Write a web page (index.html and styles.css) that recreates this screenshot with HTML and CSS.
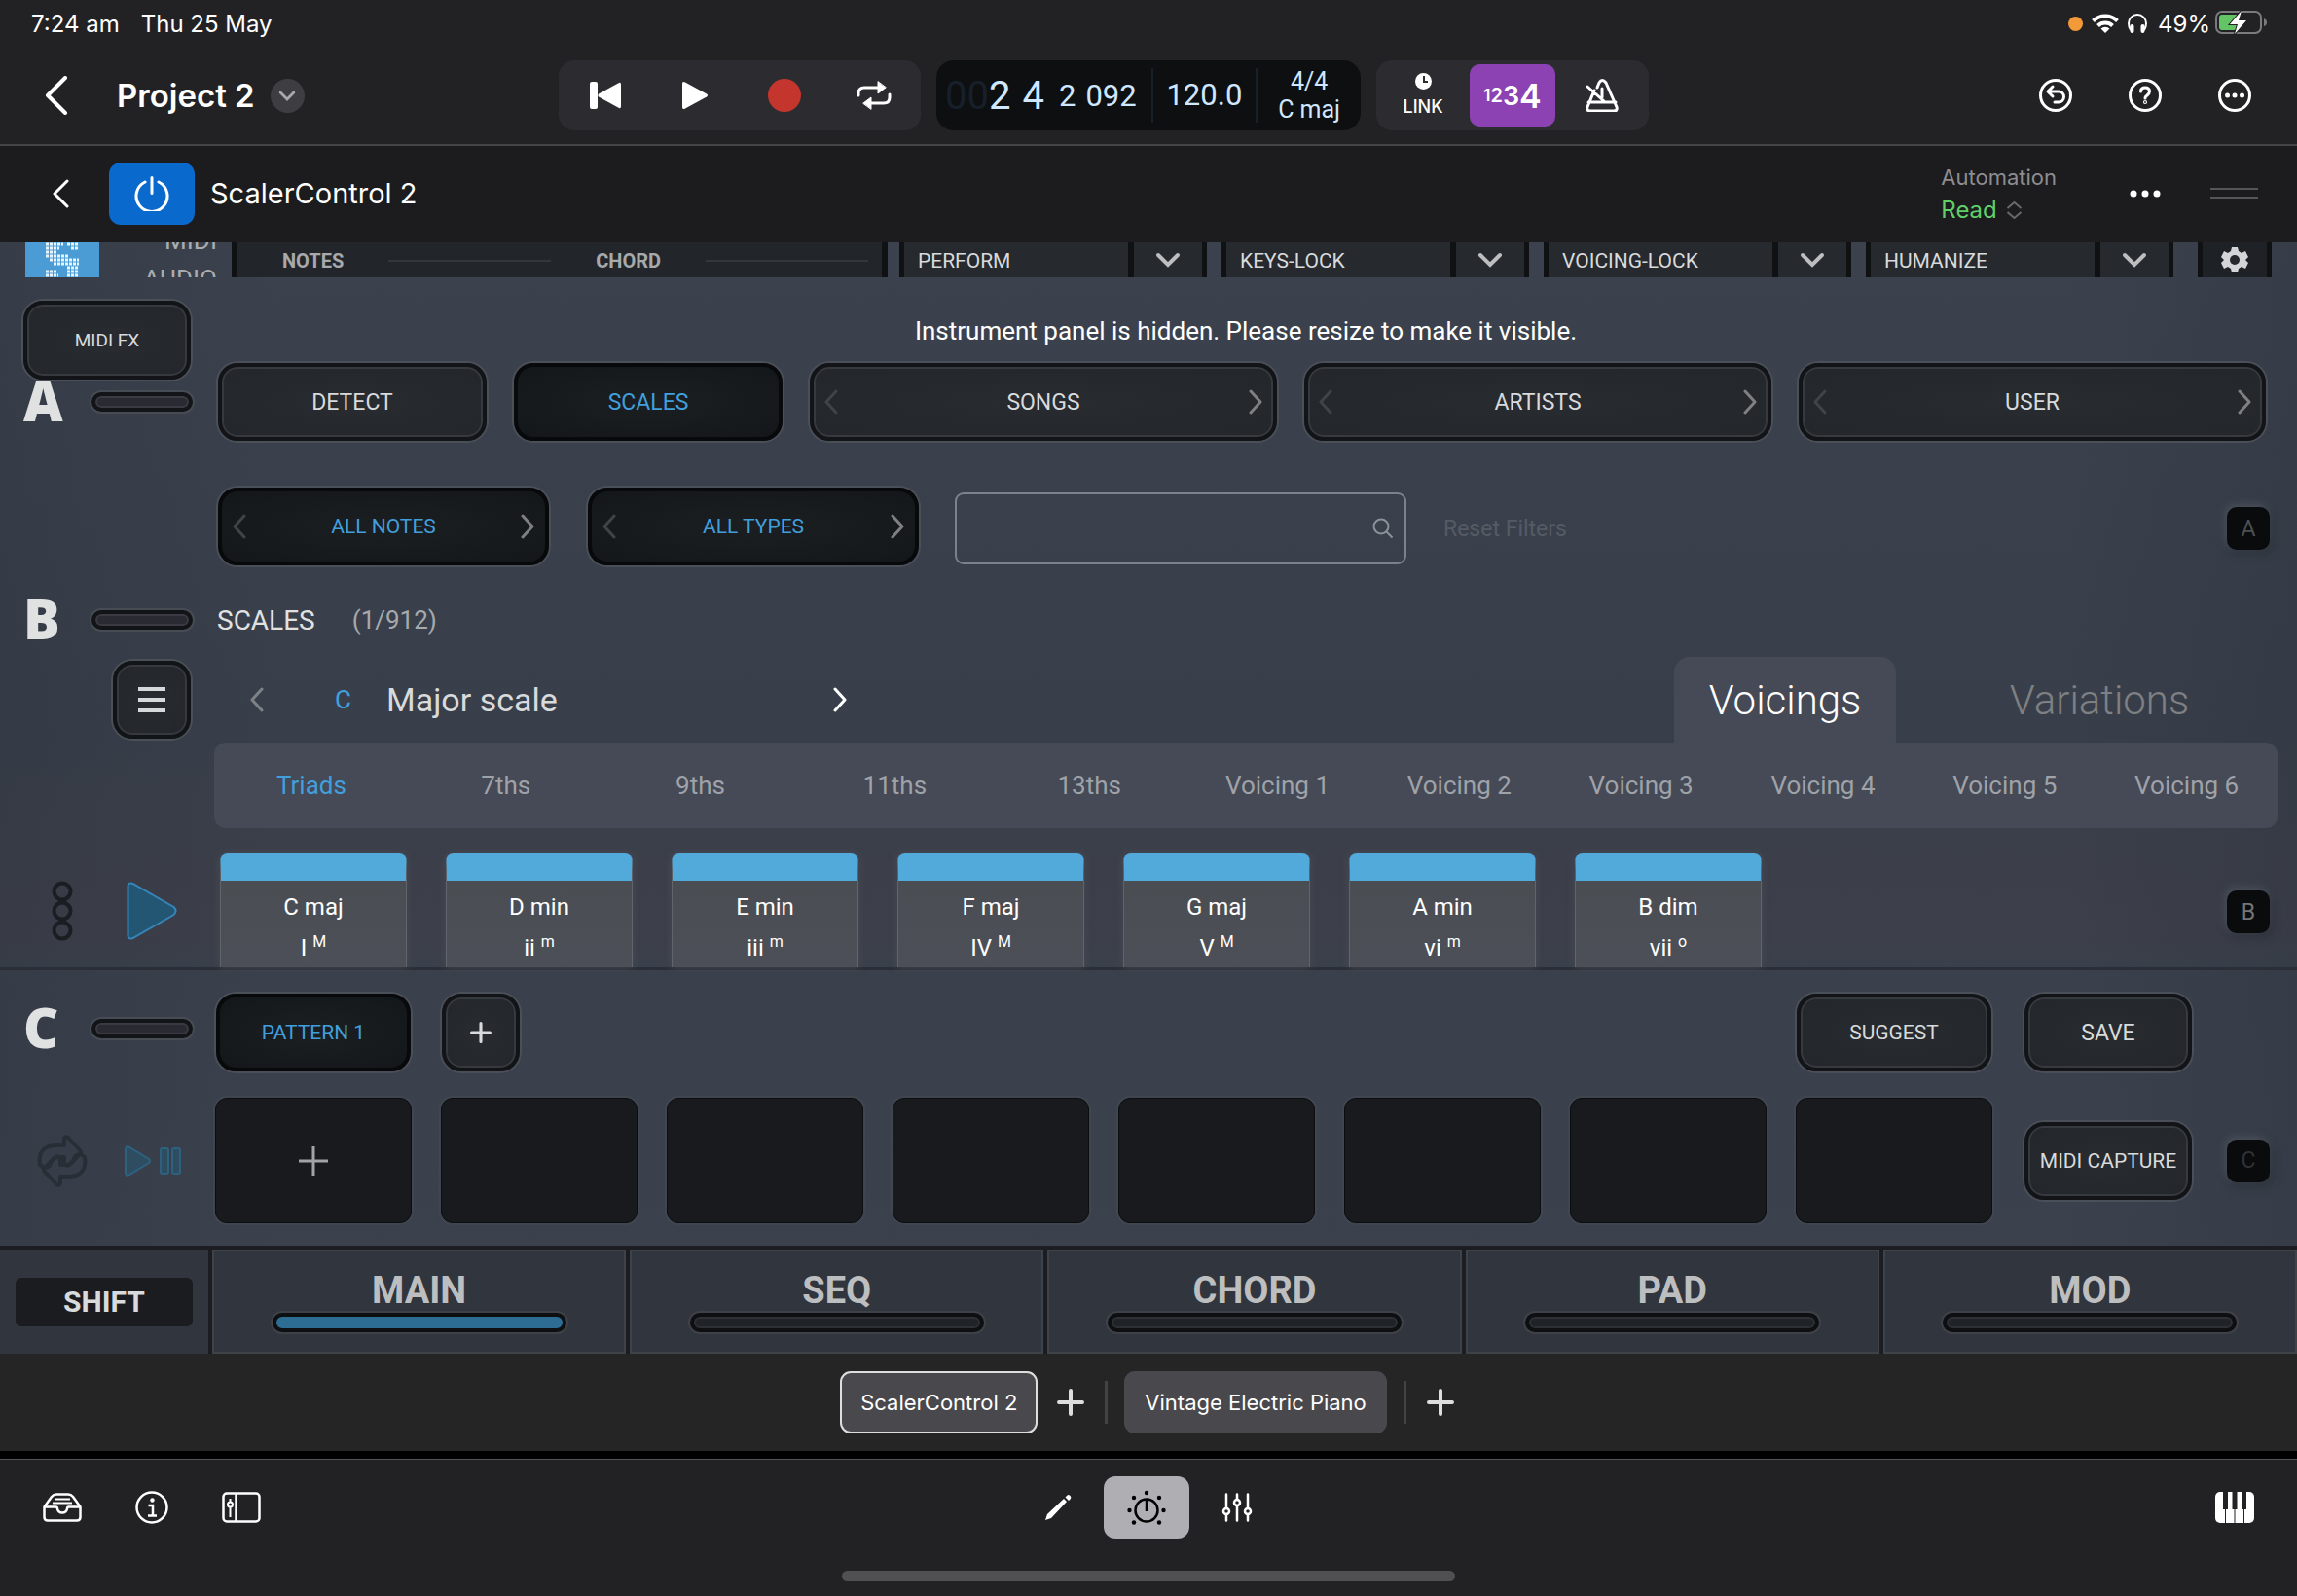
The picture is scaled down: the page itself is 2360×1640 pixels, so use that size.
FILE: index.html
```html
<!DOCTYPE html>
<html lang="en">
<head>
  <meta charset="UTF-8">
  <meta name="viewport" content="width=device-width, initial-scale=1.0">
  <title>Project 2</title>
  <link rel="stylesheet" href="styles.css">
</head>
<body>
  <svg class="defs" width="0" height="0">
    <symbol id="prev" viewBox="0 0 16 26"><path d="M13 2 3 13l10 11" fill="none" stroke="currentColor" stroke-width="3" stroke-linecap="round" stroke-linejoin="round"/></symbol>
    <symbol id="next" viewBox="0 0 16 26"><path d="m3 2 10 11L3 24" fill="none" stroke="currentColor" stroke-width="3" stroke-linecap="round" stroke-linejoin="round"/></symbol>
    <symbol id="down" viewBox="0 0 26 16"><path d="m3 3 10 10L23 3" fill="none" stroke="currentColor" stroke-width="4" stroke-linecap="round"/></symbol>
    <symbol id="plus" viewBox="0 0 28 28"><path d="M14 2v24M2 14h24" fill="none" stroke="currentColor" stroke-width="4" stroke-linecap="round"/></symbol>
  </svg>

  <div class="status">
    <span>7:24 am</span>
    <span>Thu 25 May</span>
    <div class="status-right">
      <i class="dot"></i>
      <svg width="28" height="20" viewBox="0 0 28 20" fill="none" stroke="#fff" stroke-width="4"><path d="M1.500 7.500a18 18 0 0 1 25 0M6.500 12.500a11 11 0 0 1 15 0"/><path d="M14 20l-4.500-4.500a6.500 6.500 0 0 1 9 0z" fill="#fff" stroke="none"/></svg>
      <svg width="20" height="20" viewBox="0 0 20 20" fill="none" stroke="#fff" stroke-width="2"><path d="M3 17C1 14 1 12 1 10a9 9 0 0 1 18 0c0 2 0 4-2 7"/><path d="M4.500 13v5M15.500 13v5" stroke-width="4" stroke-linecap="round"/></svg>
      <span>49%</span>
      <svg width="54" height="26" viewBox="0 0 54 26"><rect x="1" y="1" width="46" height="22" rx="6" fill="none" stroke="#7b7b7d" stroke-width="2"/><path d="M50 8q3 1 3 4t-3 4z" fill="#7b7b7d"/><rect x="4" y="4" width="20" height="16" rx="3" fill="#63c466"/><path d="M27 0 15 14h8l-3 10 12-14h-8z" fill="#fff" stroke="#222224" stroke-width="2" paint-order="stroke"/></svg>
    </div>
  </div>

  <header class="toolbar">
    <div class="project">
      <button class="icon back"><svg width="24" height="40" viewBox="0 0 24 40"><path d="M21 2 3 20l18 18" fill="none" stroke="currentColor" stroke-width="4" stroke-linecap="round" stroke-linejoin="round"/></svg></button>
      <h1>Project 2</h1>
      <button class="icon caret"><svg width="18" height="11"><use href="#down"/></svg></button>
    </div>
    <div class="group">
      <button class="icon"><svg width="32" height="28" viewBox="0 0 32 28" fill="currentColor"><rect width="8" height="28" rx="2"/><path d="M30 1q2-1 2 2v22q0 3-2 2L9 15.500q-1.500-1.500 0-3z"/></svg></button>
      <button class="icon"><svg width="26" height="28" viewBox="0 0 26 28" fill="currentColor"><path d="M0 2q0-3 3-1.500l22 12q2 1.500 0 3l-22 12Q0 29 0 26z"/></svg></button>
      <button class="icon"><svg width="34" height="34"><circle cx="17" cy="17" r="17" fill="#c4352d"/></svg></button>
      <button class="icon"><svg width="36" height="30" viewBox="0 0 36 30" fill="none" stroke="currentColor" stroke-width="3" stroke-linecap="round"><path d="M2 15v-2q0-6 6-6h15M34 14v3q0 6-6 6H14"/><path d="M22 1v12l8-6zM15 29V17l-8 6z" fill="currentColor" stroke-width="1" stroke-linejoin="round"/></svg></button>
    </div>
    <div class="lcd">
      <div class="position"><span class="big"><span class="ghost">00</span>2</span><span class="big">4</span><span class="beat">2</span><span>092</span></div>
      <div class="tempo">120.0</div>
      <div class="signature"><span>4/4</span><span>C maj</span></div>
    </div>
    <div class="group">
      <button class="icon link"><svg width="17" height="17" viewBox="0 0 17 17"><circle cx="8.500" cy="8.500" r="8.500" fill="#fff"/><path d="M9 3v6h4" fill="none" stroke="#2c2b30" stroke-width="2"/></svg>LINK</button>
      <button class="icon count"><span>1</span><span>2</span><span>3</span><span>4</span></button>
      <button class="icon"><svg width="34" height="34" viewBox="0 0 34 34" fill="none" stroke="currentColor" stroke-width="3" stroke-linecap="round" stroke-linejoin="round"><path d="M9 12 2 29q-1 4 3 4h24q4 0 3-4L21 4q-4-5-7 0l-2 5M3 24h28M17 10v9M2 8l17 15"/></svg></button>
    </div>
    <div class="actions">
      <button class="icon"><svg width="34" height="34" viewBox="0 0 34 34" fill="none" stroke="currentColor" stroke-width="3" stroke-linecap="round" stroke-linejoin="round"><circle cx="17" cy="17" r="15.500"/><path d="m14 8-5 5 5 5M10 13h10a5.500 5.500 0 0 1 0 11h-4"/></svg></button>
      <button class="icon"><svg width="34" height="34" viewBox="0 0 34 34" fill="none" stroke="currentColor" stroke-width="3" stroke-linecap="round"><circle cx="17" cy="17" r="15.500"/><path d="M12.500 13q0-4 4.500-4t4.500 4q0 2-2.500 4-2 1.500-2 3"/><circle cx="17" cy="24" r=".6"/></svg></button>
      <button class="icon"><svg width="34" height="34" viewBox="0 0 34 34" fill="none" stroke="currentColor" stroke-width="3"><circle cx="17" cy="17" r="15.500"/><g fill="currentColor" stroke="none"><circle cx="9.500" cy="17" r="2.500"/><circle cx="17" cy="17" r="2.500"/><circle cx="24.500" cy="17" r="2.500"/></g></svg></button>
    </div>
  </header>

  <div class="plugin-bar">
    <button class="icon back"><svg width="18" height="30" viewBox="0 0 18 30"><path d="M16 2 3 15l13 13" fill="none" stroke="currentColor" stroke-width="3" stroke-linecap="round" stroke-linejoin="round"/></svg></button>
    <button class="icon power"><svg width="36" height="36" viewBox="0 0 36 36" fill="none" stroke="currentColor" stroke-width="3" stroke-linecap="round"><path d="M11 6a16 16 0 1 0 14 0M18 1.500v16"/></svg></button>
    <h2>ScalerControl 2</h2>
    <div class="automation">
      <span>Automation</span>
      <button class="read">Read <svg width="17" height="18" viewBox="0 0 17 18" fill="none" stroke="#68686c" stroke-width="2"><path d="m1.500 7 7-6 7 6M1.500 11l7 6 7-6"/></svg></button>
    </div>
    <button class="icon more"><svg width="32" height="8" fill="currentColor"><circle cx="4" cy="4" r="3.500"/><circle cx="16" cy="4" r="3.500"/><circle cx="28" cy="4" r="3.500"/></svg></button>
    <div class="grip"></div>
  </div>

  <main class="plugin">
    <div class="strip">
      <div class="logo"><svg width="76" height="36" viewBox="0 0 76 36"><path d="M21 2h18M43 2h12M21 6h14M47 6h8M21 10h12M21 14h24M25 18h30M29 22h26M43 26h12M21 30h11M43 30h12M21 34h13M43 34h12" stroke="#e8f4fb" stroke-width="3" stroke-dasharray="3 1"/></svg></div>
      <div class="io"><span>MIDI</span><span>AUDIO</span></div>
      <div class="display"><span>NOTES</span><i></i><span>CHORD</span><i></i></div>
      <label class="drop"><select aria-label="Perform"><option>PERFORM</option></select><svg width="26" height="16"><use href="#down"/></svg></label>
      <label class="drop"><select aria-label="Keys lock"><option>KEYS-LOCK</option></select><svg width="26" height="16"><use href="#down"/></svg></label>
      <label class="drop"><select aria-label="Voicing lock"><option>VOICING-LOCK</option></select><svg width="26" height="16"><use href="#down"/></svg></label>
      <label class="drop"><select aria-label="Humanize"><option>HUMANIZE</option></select><svg width="26" height="16"><use href="#down"/></svg></label>
      <button class="gear"><svg width="28" height="28" viewBox="0 0 28 28"><path d="M11 1h6l1 4 3 2 4-2 3 6-3 3 3 3-3 6-4-2-3 2-1 4h-6l-1-4-3-2-4 2-3-6 3-3-3-3 3-6 4 2 3-2z" fill="#d4d5d6"/><circle cx="14" cy="14" r="5" fill="#25282c"/></svg></button>
    </div>

    <section class="section-a">
      <div class="side">
        <button class="btn midi-fx">MIDI FX</button>
        <div class="marker"><b>A</b><button class="pill"></button></div>
      </div>
      <div class="content">
        <p class="message">Instrument panel is hidden. Please resize to make it visible.</p>
        <div class="sources">
          <button class="btn">DETECT</button>
          <button class="btn on">SCALES</button>
          <div class="btn stepper wide"><button class="off"><svg width="16" height="26"><use href="#prev"/></svg></button><span>SONGS</span><button><svg width="16" height="26"><use href="#next"/></svg></button></div>
          <div class="btn stepper wide"><button class="off"><svg width="16" height="26"><use href="#prev"/></svg></button><span>ARTISTS</span><button><svg width="16" height="26"><use href="#next"/></svg></button></div>
          <div class="btn stepper wide"><button class="off"><svg width="16" height="26"><use href="#prev"/></svg></button><span>USER</span><button><svg width="16" height="26"><use href="#next"/></svg></button></div>
        </div>
        <div class="filters">
          <div class="btn on small stepper"><button class="off"><svg width="16" height="26"><use href="#prev"/></svg></button><span>ALL NOTES</span><button><svg width="16" height="26"><use href="#next"/></svg></button></div>
          <div class="btn on small stepper"><button class="off"><svg width="16" height="26"><use href="#prev"/></svg></button><span>ALL TYPES</span><button><svg width="16" height="26"><use href="#next"/></svg></button></div>
          <label class="search"><input type="text" aria-label="Search scales"><svg width="22" height="22" viewBox="0 0 22 22" fill="none" stroke="#8d9198" stroke-width="2"><circle cx="9" cy="9" r="7.500"/><path d="m14.500 14.500 6 6"/></svg></label>
          <button class="reset">Reset Filters</button>
          <button class="key">A</button>
        </div>
      </div>
    </section>

    <section class="section-b">
      <div class="row title">
        <div class="side marker"><b>B</b><button class="pill"></button></div>
        <h3>SCALES</h3><span class="counter">(1/912)</span>
      </div>
      <div class="row picker">
        <div class="side menu-side"><button class="btn square"><svg width="28" height="26" viewBox="0 0 28 26"><path d="M0 2h28M0 13h28M0 24h28" stroke="#d6d9da" stroke-width="4"/></svg></button></div>
        <button class="icon step"><svg width="16" height="26"><use href="#prev"/></svg></button>
        <span class="root">C</span>
        <span class="scale">Major scale</span>
        <button class="icon step active"><svg width="16" height="26"><use href="#next"/></svg></button>
        <div class="tabs"><button class="tab current">Voicings</button><button class="tab">Variations</button></div>
      </div>
      <div class="voicings">
        <button class="current">Triads</button>
        <button>7ths</button>
        <button>9ths</button>
        <button>11ths</button>
        <button>13ths</button>
        <button class="v">Voicing 1</button>
        <button class="v">Voicing 2</button>
        <button class="v">Voicing 3</button>
        <button class="v">Voicing 4</button>
        <button class="v">Voicing 5</button>
        <button class="v">Voicing 6</button>
      </div>
      <div class="row chords">
        <div class="side tools">
          <button class="icon"><svg width="24" height="62" viewBox="0 0 24 62" fill="none" stroke="#1a1d21" stroke-width="4"><circle cx="12" cy="11" r="8.500"/><circle cx="12" cy="31" r="8.500"/><circle cx="12" cy="51" r="8.500"/></svg></button>
          <button class="icon"><svg width="52" height="60" viewBox="0 0 52 60"><path d="M1.500 5q0-5 5-3l42 24q4 4 0 8l-42 24q-5 2-5-3z" fill="#235673" stroke="#3685b8" stroke-width="2"/></svg></button>
        </div>
        <button class="chord"><span>C maj</span><span>I <sup>M</sup></span></button>
        <button class="chord"><span>D min</span><span>ii <sup>m</sup></span></button>
        <button class="chord"><span>E min</span><span>iii <sup>m</sup></span></button>
        <button class="chord"><span>F maj</span><span>IV <sup>M</sup></span></button>
        <button class="chord"><span>G maj</span><span>V <sup>M</sup></span></button>
        <button class="chord"><span>A min</span><span>vi <sup>m</sup></span></button>
        <button class="chord"><span>B dim</span><span>vii <sup>o</sup></span></button>
        <button class="key lit">B</button>
      </div>
    </section>

    <section class="section-c">
      <div class="row patterns">
        <div class="side marker"><b>C</b><button class="pill"></button></div>
        <button class="btn on small pattern">PATTERN 1</button>
        <button class="btn square"><svg width="22" height="22"><use href="#plus"/></svg></button>
        <button class="btn small suggest">SUGGEST</button>
        <button class="btn end save">SAVE</button>
      </div>
      <div class="row slots">
        <div class="side tools">
          <button class="icon"><svg width="54" height="54" viewBox="0 0 54 54" fill="none" stroke="#292e36" stroke-width="4" stroke-linejoin="round"><path d="M4 31Q1 12 20 11h9V4q1-3 4-1l12 13q2 2 0 4L34 31q-4 2-5-2v-6h-6q-7 0-9 9-5 4-10-1z"/><path d="M50 23q3 19-16 20h-9v7q-1 3-4 1L9 38q-2-2 0-4l11-11q4-2 5 2v6h6q7 0 9-9 5-4 10 1z"/></svg></button>
          <button class="icon"><svg width="60" height="32" viewBox="0 0 60 32" fill="#2e4d60" stroke="#2e6180" stroke-width="2"><path d="M2 4q0-4 4-2l20 12q2 2 0 4L6 30q-4 2-4-2z"/><rect x="38" y="3" width="8" height="26" rx="2"/><rect x="50" y="3" width="8" height="26" rx="2"/></svg></button>
        </div>
        <button class="slot"><svg width="30" height="30" viewBox="0 0 30 30"><path d="M15 0v30M0 15h30" stroke="#a2a3a5" stroke-width="3"/></svg></button>
        <button class="slot"></button>
        <button class="slot"></button>
        <button class="slot"></button>
        <button class="slot"></button>
        <button class="slot"></button>
        <button class="slot"></button>
        <button class="slot"></button>
        <button class="btn small end">MIDI CAPTURE</button>
        <button class="key dim">C</button>
      </div>
    </section>

    <nav class="pages">
      <div class="shift-cell"><button class="shift">SHIFT</button></div>
      <button class="page current">MAIN<i class="pill"></i></button>
      <button class="page">SEQ<i class="pill"></i></button>
      <button class="page">CHORD<i class="pill"></i></button>
      <button class="page">PAD<i class="pill"></i></button>
      <button class="page">MOD<i class="pill"></i></button>
    </nav>
  </main>

  <div class="chain">
    <button class="chip selected">ScalerControl 2</button>
    <button class="icon add"><svg width="28" height="28"><use href="#plus"/></svg></button>
    <i></i>
    <button class="chip">Vintage Electric Piano</button>
    <i></i>
    <button class="icon add"><svg width="28" height="28"><use href="#plus"/></svg></button>
  </div>

  <footer class="dock">
    <div class="dock-row">
      <div class="dock-group">
        <button class="icon"><svg width="40" height="30" viewBox="0 0 40 30" fill="none" stroke="#fff" stroke-width="2.500" stroke-linejoin="round"><path d="M1.500 14.500 9 4q2-2.500 5-2.500h12q3 0 5 2.500l7.500 10.500V25q0 3.500-3.500 3.500H5q-3.500 0-3.500-3.500zh12q1.500 0 1.500 2 1 4 5 4t5-4q0-2 1.500-2h12"/><path d="M12 6.500h16M10 10.500h20" stroke-width="2"/></svg></button>
        <button class="icon"><svg width="34" height="34" viewBox="0 0 34 34" fill="none" stroke="#fff" stroke-width="2.500"><circle cx="17" cy="17" r="15.500"/><path d="M13.500 15H18v10M13 25.500h9"/><circle cx="17.500" cy="9.500" r="2.200" fill="#fff" stroke="none"/></svg></button>
        <button class="icon"><svg width="40" height="32" viewBox="0 0 40 32" fill="none" stroke="#fff" stroke-width="2.500"><rect x="1.500" y="1.500" width="37" height="29" rx="3.500"/><path d="M14.500 2v28"/><path d="M8.500 7v3M8.500 16v10" stroke-width="2"/><circle cx="8.500" cy="13" r="2.500" stroke-width="2"/></svg></button>
      </div>
      <div class="dock-group center">
        <button class="icon"><svg width="28" height="28" viewBox="0 0 28 28" fill="#fff"><path d="m1 27 2-6L20 5l3 3L7 25zM21.500 3.500l2-2q1.500-1 3 .500t.500 3l-2 2z"/></svg></button>
        <button class="icon selected"><svg width="40" height="36" viewBox="0 0 40 36" fill="none" stroke="#000" stroke-width="2.500"><circle cx="20" cy="21" r="11.500"/><path d="M20 10v12"/><g fill="#000" stroke="none"><circle cx="20" cy="3" r="2.200"/><circle cx="7" cy="8" r="2.200"/><circle cx="33" cy="8" r="2.200"/><circle cx="2.500" cy="21" r="2.200"/><circle cx="37.500" cy="21" r="2.200"/><circle cx="7" cy="33.500" r="2.200"/><circle cx="33" cy="33.500" r="2.200"/></g></svg></button>
        <button class="icon"><svg width="32" height="30" viewBox="0 0 32 30" fill="none" stroke="#fff" stroke-width="2.500" stroke-linecap="round"><path d="M5 1.500V16M5 22v6.500M16 1.500V7M16 13v15.500M27 1.500V16M27 22v6.500"/><circle cx="5" cy="19" r="3"/><circle cx="16" cy="10" r="3"/><circle cx="27" cy="19" r="3"/></svg></button>
      </div>
      <div class="dock-group right">
        <button class="icon"><svg width="40" height="32" viewBox="0 0 40 32"><rect width="40" height="32" rx="5" fill="#fff"/><path d="M8 0h5v18H8zM17.500 0h5v18h-5zM27 0h5v18h-5zM10 18h1v14h-1zM19.500 18h1v14h-1zM29 18h1v14h-1z" fill="#222224"/></svg></button>
      </div>
    </div>
    <div class="home"></div>
  </footer>
</body>
</html>
```
FILE: styles.css
```css
* {
  box-sizing: border-box;
}
body {
  margin: 0;
  min-height: 100vh;
  display: flex;
  flex-direction: column;
  background: #222224;
  color: #fff;
  font-family: Inter, "Liberation Sans", sans-serif;
}
h1, h2, h3, p {
  margin: 0;
  font-weight: 400;
}
button, select, input {
  margin: 0;
  padding: 0;
  border: 0;
  background: none;
  color: inherit;
  font: inherit;
}
svg {
  display: block;
  flex: none;
}
.defs {
  position: absolute;
}
.icon {
  display: flex;
  align-items: center;
  justify-content: center;
}

/* status */
.status {
  display: flex;
  align-items: center;
  gap: 22px;
  height: 48px;
  padding: 0 30px 0 32px;
  font-size: 24px;
}
.status-right {
  display: flex;
  align-items: center;
  gap: 9px;
  margin-left: auto;
}
.status-right span {
  margin: 0 -4px 0 2px;
}
.dot {
  width: 15px;
  height: 15px;
  border-radius: 50%;
  background: #f19a37;
}

/* top toolbar */
.toolbar {
  display: flex;
  align-items: center;
  gap: 16px;
  height: 102px;
  border-bottom: 2px solid #444446;
}
.project {
  display: flex;
  align-items: center;
  width: 558px;
  padding-left: 46px;
}
.project h1 {
  margin: 0 16px 0 50px;
  font-size: 33px;
  font-weight: 600;
}
.caret {
  width: 35px;
  height: 35px;
  border-radius: 50%;
  background: #3e3d42;
  color: #a9a9ad;
}
.group {
  display: flex;
  padding: 4px 2px;
  height: 72px;
  border-radius: 16px;
  background: #2c2b30;
}
.group .icon {
  width: 92px;
}
.lcd {
  display: flex;
  align-items: center;
  width: 436px;
  height: 72px;
  border-radius: 18px;
  background: #0e0f11;
  color: #cfe7ff;
  font-family: Roboto, sans-serif;
  font-size: 31px;
}
.position {
  display: flex;
  align-items: center;
  gap: 12px;
  width: 221px;
  padding-left: 9px;
}
.big {
  font-size: 40px;
}
.beat {
  margin-left: 3px;
  margin-right: -2px;
}
.ghost {
  color: #17202a;
}
.tempo, .signature {
  width: 108px;
  height: 56px;
  line-height: 56px;
  border-left: 2px solid #172029;
  text-align: center;
}
.signature {
  display: flex;
  flex-direction: column;
  justify-content: center;
  font-size: 25px;
  line-height: 29px;
}
.group .link {
  flex-direction: column;
  gap: 7px;
  font-size: 18px;
  font-weight: 500;
  line-height: 22px;
}
.group .count {
  width: 88px;
  margin: 0 2px;
  border-radius: 10px;
  background: #8c42b2;
  font-weight: 600;
  font-size: 20px;
}
.count span:first-child {
  font-size: 17px;
}
.count span:nth-child(3) {
  font-size: 27px;
}
.count span:nth-child(4) {
  font-size: 34px;
}
.actions {
  display: flex;
  gap: 58px;
  margin-left: auto;
  padding-right: 47px;
}

/* plugin bar */
.plugin-bar {
  display: flex;
  align-items: center;
  height: 99px;
  padding: 0 40px 2px 53px;
  background: #1c1c1e;
}
.power {
  width: 88px;
  height: 64px;
  margin: 0 16px 0 41px;
  border-radius: 12px;
  background: #0a69cc;
}
.plugin-bar h2 {
  font-size: 29px;
}
.automation {
  display: flex;
  flex-direction: column;
  gap: 4px;
  margin-left: auto;
  color: #8d8d92;
  font-size: 22px;
  line-height: 30px;
}
.read {
  display: flex;
  align-items: center;
  gap: 9px;
  color: #5fd068;
  font-size: 24px;
}
.more {
  margin: 0 51px 0 75px;
}
.grip {
  width: 49px;
  height: 11px;
  border: solid #565658;
  border-width: 2px 0;
}

/* plugin */
.plugin {
  background: linear-gradient(90deg, rgba(40, 46, 56, .25), transparent 12%, transparent 90%, rgba(40, 46, 56, .25)), linear-gradient(#3b424d, #393f4a 45%, #3d3f4a 62%, #3a414c 66%, #3b414d);
  color: #d8dadb;
  font-family: Roboto, "Liberation Sans", sans-serif;
}
.strip {
  display: flex;
  gap: 15px;
  height: 36px;
  padding: 0 26px;
  overflow: hidden;
}
.logo {
  width: 76px;
  background: #4b9cd5;
}
.io {
  width: 106px;
  height: 80px;
  margin-top: -22px;
  color: #a9adb2;
  font-size: 26px;
  line-height: 40px;
  text-align: right;
}
.io span {
  display: block;
}
.display {
  display: flex;
  align-items: center;
  gap: 46px;
  flex: 1;
  margin-right: -3px;
  padding: 2px 14px 0 46px;
  border: solid #0f1113;
  border-width: 0 6px;
  background: #22262b;
  color: #a7a9ab;
  font-size: 20px;
  font-weight: 700;
}
.display i {
  flex: 1;
  height: 2px;
  background: #33373c;
}
.drop {
  display: flex;
  align-items: center;
  flex: 0 1 316px;
  border: solid #0f1113;
  border-width: 0 5px;
  background: #26292e;
}
.drop select {
  flex: 1;
  height: 36px;
  padding: 2px 0 0 14px;
  appearance: none;
  font-size: 21px;
}
.drop svg {
  width: 76px;
  height: 36px;
  padding: 10px 22px;
  border-left: 6px solid #0f1113;
  color: #bcbec0;
  pointer-events: none;
}
.gear {
  display: flex;
  align-items: center;
  justify-content: center;
  width: 76px;
  margin-left: 10px;
  border: solid #0f1113;
  border-width: 0 5px;
  background: #1e2125;
}

.side {
  flex: none;
  width: 220px;
}
.btn {
  display: flex;
  align-items: center;
  justify-content: center;
  height: 80px;
  border: 4px solid #121417;
  border-radius: 20px;
  background: radial-gradient(#282b2f, #23262b);
  box-shadow: 0 0 0 2px #4a4f58, inset 0 0 0 2px #36393e;
  color: #d8dadb;
  font-size: 23px;
}
.btn.on {
  border-color: #08090b;
  background: radial-gradient(#1b1f22, #14171a);
  box-shadow: 0 0 0 2px #4a4f58;
  color: #419fdc;
}
.btn.small {
  font-size: 21px;
}
.btn.square {
  width: 80px;
}
.btn.end {
  width: 172px;
}
.stepper {
  justify-content: space-between;
  padding: 0 10px;
}
.stepper button {
  color: #7e8082;
}
.stepper .off {
  color: #404347;
}
.marker {
  display: flex;
  align-items: center;
  height: 40px;
  padding-left: 24px;
}
.marker b {
  width: 70px;
  color: #e0e2e2;
  font-family: "Open Sans", sans-serif;
  font-size: 56px;
  font-weight: 800;
  line-height: 36px;
  height: 40px;
}
.pill {
  width: 104px;
  height: 20px;
  border: 4px solid #121417;
  border-radius: 10px;
  background: #2a2b32;
  box-shadow: 0 0 0 2px #474c54, inset 0 0 0 2px #3a3b42;
}
.key {
  width: 44px;
  height: 44px;
  margin: 0 28px 0 auto;
  border-radius: 10px;
  background: #0a0b0d;
  box-shadow: -2px -3px 8px #4a515b, 3px 4px 8px #2d323a;
  color: #4d4f52;
  font-size: 23px;
}
.key.lit {
  color: #737577;
}
.key.dim {
  color: #303236;
}

.section-a {
  display: flex;
}
.section-a .side {
  padding-top: 24px;
}
.midi-fx {
  width: 172px;
  height: 81px;
  margin: 0 0 3px 24px;
  font-size: 19px;
}
.section-a .midi-fx {
  font-size: 19px;
}
.content {
  flex: 1;
  padding-left: 4px;
}
.message {
  padding: 39px 24px 17px 0;
  color: #fff;
  font-size: 26px;
  line-height: 32px;
  text-align: center;
}
.sources {
  display: flex;
  gap: 28px;
  padding-right: 32px;
}
.sources .btn {
  flex: 276 1 276px;
}
.sources .wide {
  flex: 480 1 480px;
}
.filters {
  display: flex;
  align-items: center;
  margin-top: 48px;
}
.filters .btn {
  width: 340px;
  margin-right: 40px;
}
.search {
  display: flex;
  align-items: center;
  width: 464px;
  height: 74px;
  margin: 4px 38px 0 -3px;
  padding-right: 11px;
  border: 2px solid #7d828a;
  border-radius: 9px;
}
.search input {
  flex: 1;
  height: 60px;
  padding-left: 16px;
  outline: 0;
  font-size: 24px;
}
.reset {
  margin-top: 4px;
  color: #555b65;
  font-size: 23px;
}
.filters .key {
  margin-top: 4px;
}

.row {
  display: flex;
  align-items: center;
}
.title {
  height: 98px;
  padding-top: 14px;
  font-size: 26px;
}
.title h3 {
  margin: 0 38px 0 3px;
  font-size: 28px;
  color: #e0e2e2;
}
.counter {
  color: #a6a9ad;
}
.picker {
  height: 84px;
  padding: 0 40px 4px 0;
}
.menu-side {
  padding-left: 116px;
}
.step {
  margin-left: 36px;
  color: #7e8288;
}
.root {
  width: 53px;
  margin-left: 72px;
  color: #419fdc;
  font-size: 26px;
}
.scale {
  width: 422px;
  font-size: 34px;
}
.step.active {
  color: #fff;
}
.tabs {
  display: flex;
  align-self: stretch;
  margin: -4px 0 -4px auto;
}
.tab {
  width: 228px;
  border-radius: 16px 16px 0 0;
  color: #7e8083;
  font-size: 42px;
  font-weight: 300;
}
.tab.current {
  background: #454a56;
  color: #fff;
}
.tab:last-child {
  width: 372px;
  padding-left: 46px;
}
.voicings {
  display: flex;
  height: 88px;
  margin: 0 20px 0 220px;
  border-radius: 12px;
  background: #454a56;
  color: #9fa2a8;
  font-size: 26px;
}
.voicings button {
  flex: 200 1 0;
}
.voicings .v {
  flex-grow: 187;
}
.voicings .current {
  color: #419fdc;
}
.chords {
  gap: 40px;
  align-items: stretch;
  height: 146px;
  padding-top: 26px;
  border-bottom: 3px solid #2b2e37;
}
.chords .side {
  margin-right: -34px;
}
.tools {
  display: flex;
  align-items: center;
  gap: 54px;
  padding: 0 0 0 52px;
}
.chord {
  flex: 0 1 192px;
  display: flex;
  flex-direction: column;
  align-items: center;
  gap: 10px;
  padding-top: 11px;
  border: solid #60656b;
  border-width: 0 1px;
  border-radius: 8px 8px 0 0;
  border-top: 28px solid #52aadb;
  background: linear-gradient(#4a4e53, #4c4f57);
  box-shadow: 0 0 8px #484c55;
  color: #fff;
  font-size: 24px;
  line-height: 32px;
}
.chord sup {
  font-size: 16px;
  line-height: 0;
}
.chords .key {
  margin-top: 38px;
}

.patterns {
  height: 128px;
  padding-right: 108px;
}
.patterns .marker {
  padding-bottom: 8px;
}
.pattern {
  width: 200px;
  margin: 0 32px 0 2px;
}
.suggest {
  width: 200px;
  margin: 0 34px 0 auto;
}
.slots {
  gap: 30px;
  padding: 3px 0 23px;
}
.slots .side {
  gap: 36px;
  margin-right: -29px;
  padding: 0 0 0 37px;
}
.slot {
  flex: 0 1 202px;
  display: flex;
  align-items: center;
  justify-content: center;
  height: 129px;
  border: 1px solid #0c0d0f;
  border-radius: 12px;
  background: #191a1d;
  box-shadow: 0 0 0 2px #404650;
}
.slots .end {
  margin-left: 3px;
}

/* bottom pages */
.pages {
  display: flex;
  height: 111px;
  border-top: 4px solid #1b1d23;
  background: #31353d;
}
.shift-cell {
  display: flex;
  align-items: center;
  justify-content: center;
  width: 214px;
}
.shift {
  width: 182px;
  height: 50px;
  border-radius: 6px;
  background: #1b1c20;
  font-size: 30px;
  font-weight: 700;
}
.page {
  display: flex;
  flex: 1;
  flex-direction: column;
  align-items: center;
  gap: 5px;
  padding-top: 22px;
  border: 2px solid #3f4349;
  box-shadow: -4px 0 0 #1b1d23;
  margin-left: 4px;
  color: #bdbebf;
  font-size: 38px;
  font-weight: 700;
  line-height: 36px;
}
.page .pill {
  width: 302px;
  border-color: #0d0f11;
  background: #202429;
  box-shadow: 0 0 0 2px #3e4248, inset 0 0 0 2px #2d3136;
}
.page.current .pill {
  background: #2d6d94;
  box-shadow: 0 0 0 2px #3e4248;
}

/* track chain */
.chain {
  display: flex;
  align-items: center;
  justify-content: center;
  height: 100px;
  padding-right: 3px;
  background: #252525;
}
.chip {
  height: 64px;
  padding: 0 21px;
  border-radius: 11px;
  background: #49484d;
  font-size: 22px;
}
.chip.selected {
  padding: 0 19px;
  border: 2px solid #dedede;
}
.chain i {
  width: 3px;
  height: 44px;
  margin-right: 17px;
  background: #434345;
}
.chip + i {
  margin-left: 17px;
}
.add {
  margin: 0 21px 0 20px;
  color: #dedede;
}
i + .add {
  margin: 0 0 0 4px;
}

/* dock */
.dock {
  display: flex;
  flex: 1;
  flex-direction: column;
  align-items: center;
  justify-content: space-between;
  padding-bottom: 15px;
  border-top: 8px solid #000;
  box-shadow: inset 0 1px 0 #555359;
}
.dock-row {
  display: grid;
  grid-template-columns: 1fr auto 1fr;
  align-items: center;
  width: 100%;
  padding: 18px 44px 0;
}
.dock-group {
  display: flex;
  align-items: center;
  gap: 55px;
}
.dock-group.center {
  gap: 33px;
}
.dock-group.right {
  justify-content: flex-end;
}
.dock .selected {
  width: 88px;
  height: 64px;
  border-radius: 12px;
  background: #afaeb3;
}
.home {
  width: 630px;
  height: 11px;
  border-radius: 6px;
  background: #505052;
}
```
